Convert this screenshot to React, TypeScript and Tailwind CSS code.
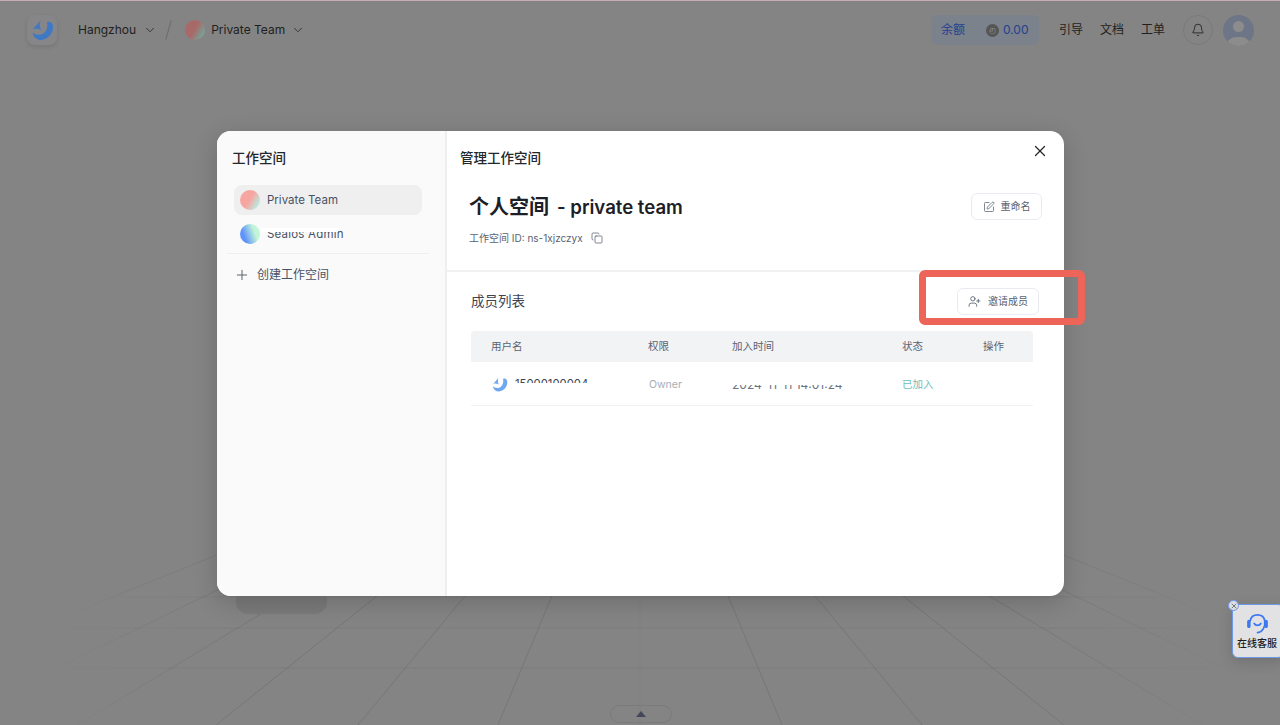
import { Bell, ChevronDown, Copy, Plus, SquarePen, UserPlus, X } from 'lucide-react'

const font = { fontFamily: 'Inter, "Noto Sans CJK SC", sans-serif' }

function Logo({ size, color }: { size: number; color: string }) {
  return (
    <svg width={size} height={size} viewBox="0 0 24 24" fill={color}>
      <path d="M17 4 C21 2.5 23.5 6 23 10 C22.5 17 16 22.5 10 22 C6 21.5 3 18 2.5 14.5 C6 17.5 11 17.5 14 15 C17 12.5 18 8 17 4 Z" />
      <path d="M10.5 2 C9 5 6 7.5 3 11 C6 10.5 8 10.5 11 12 C9.5 9 9.5 5 10.5 2 Z" />
    </svg>
  )
}

function GridFloor() {
  const bottoms = [-206, -61, 77, 216, 358, 498, 640, 782, 922, 1064, 1203, 1341, 1486]
  return (
    <svg className="absolute inset-0" width="1280" height="725" viewBox="0 0 1280 725">
      <defs>
        <radialGradient id="fade" gradientUnits="userSpaceOnUse" cx="640" cy="690" r="640">
          <stop offset="0.6" stopColor="#000" stopOpacity="0.11" />
          <stop offset="0.95" stopColor="#000" stopOpacity="0" />
        </radialGradient>
      </defs>
      {bottoms.map((x) => (
        <line key={x} x1={x} y1={725} x2={640} y2={385} stroke="url(#fade)" strokeOpacity={x === 640 ? 0.25 : 1} />
      ))}
      {[597, 628, 668].map((y) => (
        <line key={y} x1={0} y1={y} x2={1280} y2={y} stroke="url(#fade)" strokeOpacity={0.6} />
      ))}
    </svg>
  )
}

function TopBar() {
  return (
    <div className="relative flex h-[58px] items-center pl-[27px] pr-[26px]">
      <div className="flex h-[30px] w-[30px] items-center justify-center rounded-lg bg-[#868688] shadow-[0_2px_4px_rgba(0,0,0,0.1)]">
        <Logo size={24} color="#3f79c4" />
      </div>
      <span className="ml-[21px] text-[12px] text-[#1f1f20]">Hangzhou</span>
      <ChevronDown className="ml-[7px] h-3.5 w-3.5 text-[#2b2b2d]" strokeWidth={1.5} />
      <div className="ml-[11px] h-[20px] w-px rotate-[16deg] bg-[#6b6b6d]" />
      <div className="ml-[16px] h-5 w-5 rounded-full bg-[linear-gradient(120deg,#a86a68_48%,#74a69c_88%)]" />
      <span className="ml-[6px] text-[12px] text-[#1f1f20]">Private Team</span>
      <ChevronDown className="ml-[6px] h-3.5 w-3.5 text-[#2b2b2d]" strokeWidth={1.5} />

      <div className="ml-auto flex h-[30px] w-[108px] items-center rounded-md bg-[#7b828c] text-[12px] text-[#24408f]">
        <span className="ml-2.5 w-[45px]">余额</span>
        <span className="mr-1 flex h-[13px] w-[13px] items-center justify-center rounded-full bg-[#555] text-[8px] text-[#999]">◴</span>
        <span>0.00</span>
      </div>
      <span className="ml-[20px] text-[12px] text-[#1f1f20]">引导</span>
      <span className="ml-[17px] text-[12px] text-[#1f1f20]">文档</span>
      <span className="ml-[17px] text-[12px] text-[#1f1f20]">工单</span>
      <div className="ml-[18px] flex h-[30px] w-[30px] items-center justify-center rounded-full border border-[#7a7a7b]">
        <Bell className="h-3.5 w-3.5 text-[#1f1f20]" strokeWidth={1.5} />
      </div>
      <div className="relative ml-[10px] h-[31px] w-[31px] overflow-hidden rounded-full bg-[#6d7686]">
        <div className="absolute left-[10px] top-[6px] h-[11px] w-[11px] rounded-full bg-[#8c8c8d]" />
        <div className="absolute left-[3px] top-[22px] h-[20px] w-[25px] rounded-full bg-[#8c8c8d]" />
      </div>
    </div>
  )
}

function Sidebar() {
  return (
    <div className="flex w-[230px] shrink-0 flex-col border-r-2 border-[#eeeeef] bg-[#fafafa] pl-[15px] pr-[16px]">
      <div className="mt-[18px] text-[13.5px] font-medium leading-[18px] text-[#24282c]">工作空间</div>
      <div className="ml-[2px] mt-[18px] flex h-[30px] w-[188px] items-center rounded-lg bg-[#efefef] pl-[6px]">
        <div className="h-5 w-5 rounded-full bg-[linear-gradient(120deg,#f7a5a0_48%,#b5f0e6_88%)]" />
        <span className="ml-[7px] pt-[2px] text-[11.5px] text-[#485264]">Private Team</span>
      </div>
      <div className="relative ml-[2px] mt-[4px] flex h-[30px] w-[188px] items-center pl-[6px]">
        <div className="h-5 w-5 rounded-full bg-[linear-gradient(70deg,#5f92fa_25%,#c0f5d8_70%)]" />
        <span className="ml-[7px] pt-[2px] text-[11.5px] tracking-[0.2px] text-[#485264]">Sealos Admin</span>
        <div className="absolute left-[27px] top-[9px] h-[4px] w-[77px] bg-white" />
      </div>
      <div className="-ml-[5px] mt-[4px] h-px w-[202px] bg-[#eeeeef]" />
      <div className="mt-[12px] flex items-center pl-[2px]">
        <Plus className="h-4 w-4 text-[#5a6270]" strokeWidth={1.5} />
        <span className="ml-[7px] text-[12px] text-[#485264]">创建工作空间</span>
      </div>
    </div>
  )
}

function MemberTable() {
  return (
    <div className="ml-[24px] mt-[16px] w-[562px] text-[10.5px]">
      <div className="flex h-[31px] items-center rounded-t-sm bg-[#f2f3f5] text-[#5a6270]">
        <span className="ml-[20px] w-[157px]">用户名</span>
        <span className="w-[84px]">权限</span>
        <span className="w-[170px]">加入时间</span>
        <span className="w-[81px]">状态</span>
        <span>操作</span>
      </div>
      <div className="flex h-[44px] items-center border-b border-[#f0f1f4] pt-[2px]">
        <div className="relative ml-[20px] flex w-[158px] items-center">
          <Logo size={17} color="#6ea8f0" />
          <span className="ml-[7px] text-[11.3px] text-[#3c4452]">15000100004</span>
          <div className="absolute left-[24px] top-[7px] h-[10px] w-[80px] bg-white" />
        </div>
        <span className="w-[83px] text-[#a8adb6]">Owner</span>
        <div className="relative w-[170px]">
          <span className="text-[12px] text-[#6b7280]">2024-11-11 14:01:24</span>
          <div className="absolute left-0 top-0 h-[9px] w-[120px] bg-white" />
        </div>
        <span className="text-[#6cc0b8]">已加入</span>
      </div>
    </div>
  )
}

function Modal() {
  return (
    <div className="relative flex h-[465px] w-[847px] overflow-hidden rounded-[14px] bg-white shadow-[0_6px_24px_rgba(0,0,0,0.18)]">
      <Sidebar />
      <div className="relative flex min-w-0 flex-1 flex-col">
        <X className="absolute right-[15px] top-[11px] h-[18px] w-[18px] text-[#24282c]" strokeWidth={1.6} />
        <div className="ml-[13px] mt-[18px] text-[13.5px] font-medium leading-[18px] text-[#24282c]">管理工作空间</div>
        <div className="flex h-[105px] items-start justify-between border-b-2 border-[#f0f1f3] pl-[22px] pr-[22px]">
          <div>
            <div className="mt-[26px] font-semibold leading-[28px] text-[#1c2026]">
              <span className="text-[20px]">个人空间</span>
              <span className="ml-[8px] text-[18.6px]">- private team</span>
            </div>
            <div className="mt-[9px] flex items-center text-[10px] leading-[14px] text-[#5a6270]">
              工作空间 ID: ns-1xjzczyx
              <Copy className="ml-[8px] h-3 w-3" strokeWidth={1.5} />
            </div>
          </div>
          <button className="mt-[26px] flex h-[27px] w-[71px] items-center justify-center gap-[6px] rounded-md border border-[#e8ebf0] text-[10px] text-[#5a6270]">
            <SquarePen className="h-3 w-3" strokeWidth={1.5} />
            重命名
          </button>
        </div>
        <div className="flex items-center pl-[24px] pr-[25px] pt-[15px]">
          <span className="text-[13.5px] leading-[28px] text-[#3c4452]">成员列表</span>
          <button className="ml-auto flex h-[27px] w-[82px] items-center justify-center gap-[7px] rounded-md border border-[#e8ebf0] text-[10px] text-[#5a6270]">
            <UserPlus className="h-[13px] w-[13px]" strokeWidth={1.6} />
            邀请成员
          </button>
        </div>
        <MemberTable />
      </div>
    </div>
  )
}

export default function App() {
  return (
    <div className="relative h-[725px] w-[1280px] overflow-hidden bg-[#848484]" style={font}>
      <GridFloor />
      <div className="relative h-px bg-[#c4aeb4]" />
      <TopBar />
      <div className="relative ml-[217px] mt-[72px] w-fit">
        <div className="absolute bottom-[-18px] left-[19px] h-[30px] w-[91px] rounded-xl bg-[#7a7a7a]" />
        <Modal />
      </div>

      {/* red annotation over the invite button */}
      <div className="absolute left-[919px] top-[270px] h-[55px] w-[166px] rounded-md border-[7px] border-[#ec6558]" />

      {/* collapsed dock handle */}
      <div className="absolute left-[610px] top-[705px] flex h-[18px] w-[62px] items-center justify-center rounded-full border border-[#7b7b7b]">
        <div className="h-0 w-0 border-x-[5px] border-b-[6px] border-x-transparent border-b-[#42475a]" />
      </div>

      {/* support widget */}
      <div className="absolute left-[1232px] top-[604px] flex h-[54px] w-[52px] flex-col items-start rounded-md border border-[#6d98e8] bg-[#e2e2e4] pl-[4px] shadow-[0_4px_14px_rgba(0,0,0,0.15)]">
        <svg className="ml-[9px] mt-[7px]" width="23" height="23" viewBox="0 0 24 24" fill="none" stroke="#3d78ee" strokeWidth="1.8" strokeLinecap="round">
          <path d="M4.5 9 C6 1 18 1 19.5 9 C20.5 15 17.5 21 12 21.5" />
          <path d="M3 10 V15 M21 10 V15" strokeWidth="3.6" />
          <path d="M8.5 12 C10 14.5 14 14.5 15.5 12" strokeWidth="1.8" />
        </svg>
        <span className="mt-[1px] text-[10px] font-medium leading-[14px] text-[#1c1c1e]">在线客服</span>
      </div>
      <div className="absolute left-[1228px] top-[600px] flex h-[11px] w-[11px] items-center justify-center rounded-full border border-[#6d98e8] bg-[#dcdde2]">
        <X className="h-2 w-2 text-[#444]" strokeWidth={2} />
      </div>
    </div>
  )
}
